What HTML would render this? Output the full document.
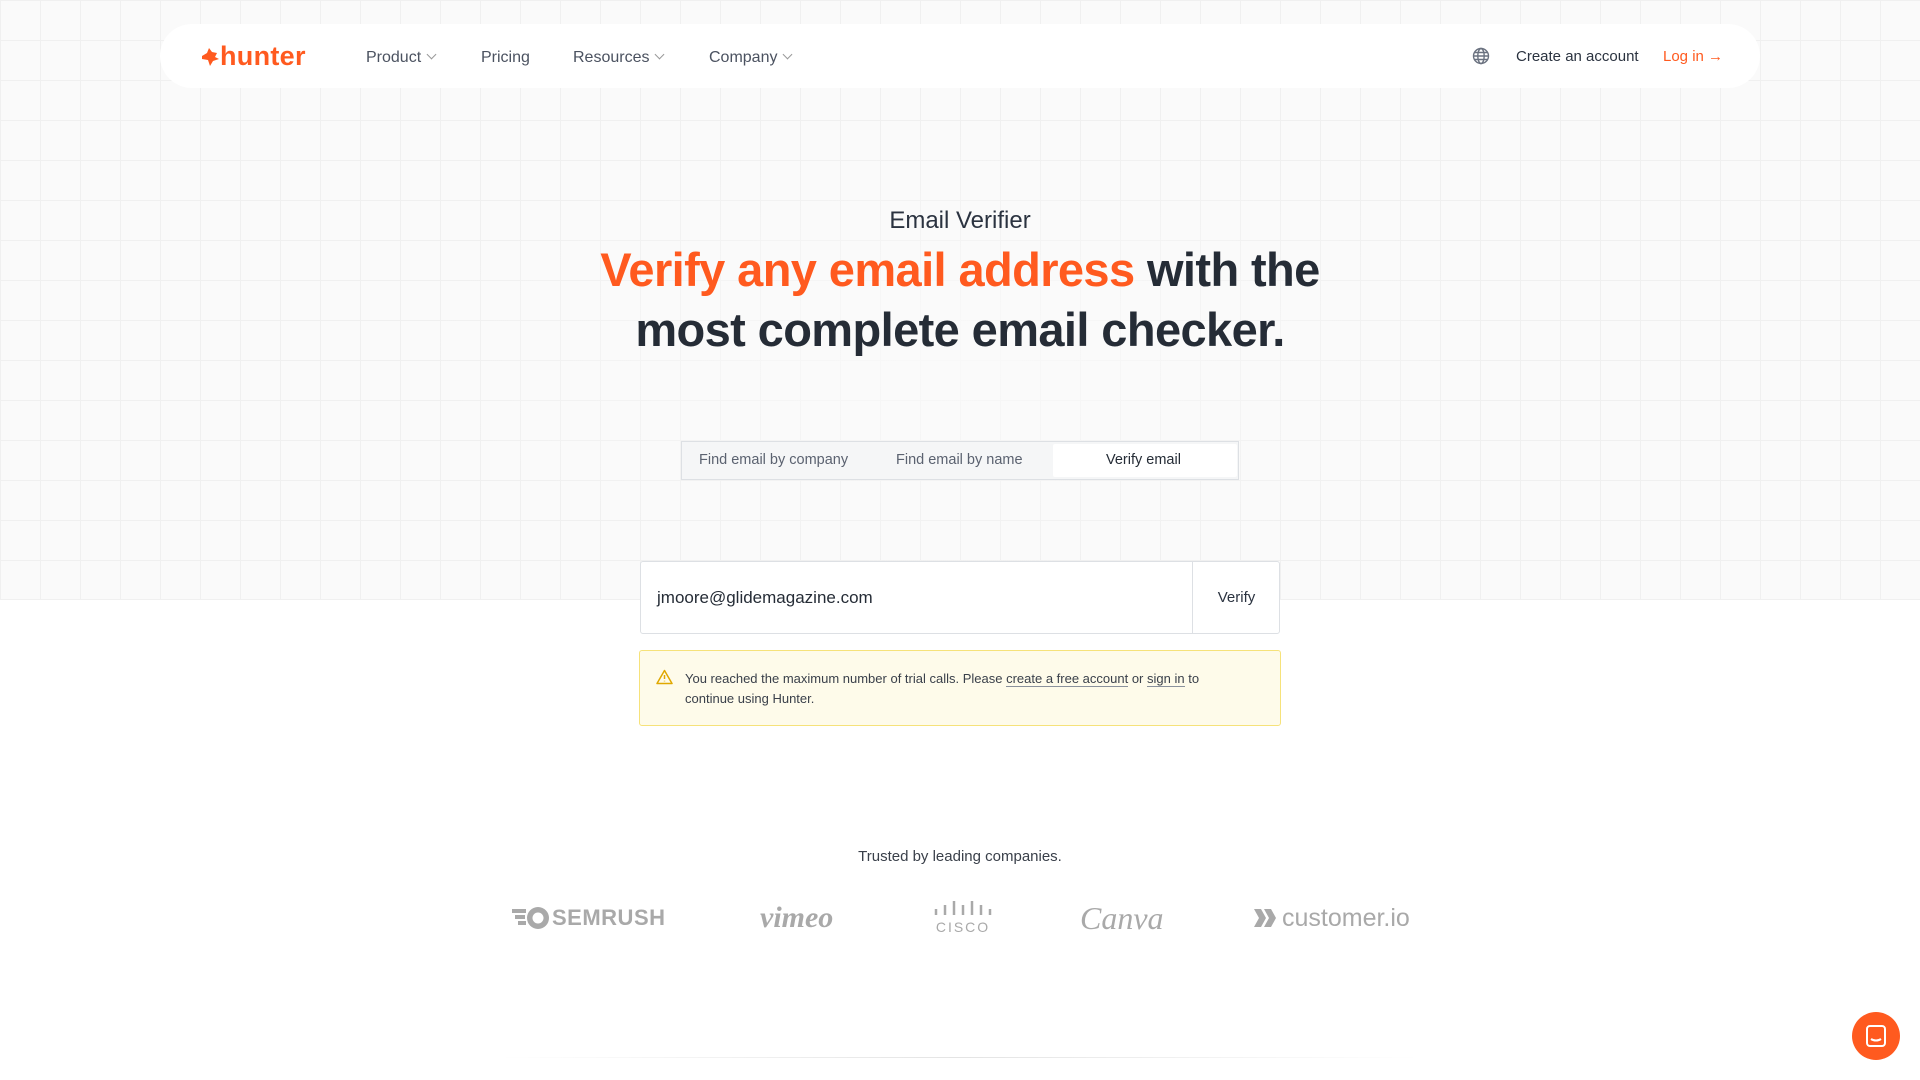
<!DOCTYPE html>
<html><head><meta charset="utf-8"><style>
*{box-sizing:border-box;margin:0;padding:0}
body{width:1920px;height:1080px;overflow:hidden;background:#fff;font-family:"Liberation Sans",sans-serif;color:#2b3340;position:relative}
.grid{position:absolute;left:0;top:0;width:1920px;height:600px;background-color:#fafafa;background-image:linear-gradient(#f0f0f0 1px,transparent 1px),linear-gradient(90deg,#f0f0f0 1px,transparent 1px);background-size:40px 40px;border-bottom:1px solid #f0f0f0}
.fade{position:absolute;left:400px;top:120px;width:1120px;height:460px;background:radial-gradient(ellipse at center,rgba(250,250,250,.85),rgba(250,250,250,0) 70%)}
.nav{position:absolute;left:160px;top:24px;width:1600px;height:64px;background:#fff;border-radius:32px}
.nav span{position:absolute;top:25px;font-size:16px;color:#4b5260}
.logo{position:absolute;left:200px;top:41px;font-size:27px;font-weight:bold;color:#ff5a1f;letter-spacing:0.3px}
.chev{display:inline-block;width:7px;height:7px;border-right:1.3px solid #999;border-bottom:1.3px solid #999;transform:rotate(45deg);margin-left:7px;position:relative;top:-4px}
h2{position:absolute;top:207px;width:100%;text-align:center;font-size:24px;font-weight:normal;color:#2b3340}
h1{position:absolute;top:240px;width:100%;text-align:center;font-size:47px;line-height:60px;font-weight:bold;color:#252c36;letter-spacing:-0.6px}
h1 b{color:#ff5a1f}
.tabs{position:absolute;left:681px;top:441px;width:558px;height:39px;border:1px solid #dde0e4;background:#f5f6f7}
.tabs span{position:absolute;top:10px;font-size:14.5px;color:#5b6270}
.act{position:absolute;left:371px;top:2px;width:184px;height:33px;background:#fff;border-radius:2px}
.inp{position:absolute;left:640px;top:561px;width:640px;height:73px;border:1px solid #dde0e4;background:#fff;border-radius:3px}
.inp .t{position:absolute;left:16px;top:26px;font-size:17px;color:#252c36}
.inp .b{position:absolute;left:551px;top:0;width:88px;height:71px;border-left:1px solid #dde0e4;text-align:center;line-height:71px;font-size:15px}
.alert{position:absolute;left:639px;top:650px;width:642px;height:76px;background:#fefbea;border:1px solid #f6e27a;border-radius:3px;font-size:13px;line-height:20px;color:#3a404a;padding:18px 20px 0 45px}
.alert u{text-decoration:none;border-bottom:1px solid #8a919c}
.trust{position:absolute;top:848px;width:100%;text-align:center;font-size:15px;color:#3a404a}
.logos{position:absolute;top:894px;left:0;width:1920px;height:48px;color:#a9a9a9}
.logos div{position:absolute;top:0;height:48px;display:flex;align-items:center}
.chat{position:absolute;left:1852px;top:1012px;width:48px;height:48px;border-radius:50%;background:#ff5a1f}
.line{position:absolute;left:500px;top:1057px;width:920px;height:1px;background:linear-gradient(90deg,transparent,#e4e4e4,transparent)}
</style></head><body>
<div class="grid"></div><div class="fade"></div>
<div class="nav"></div>
<div class="logo"><svg width="20" height="20" viewBox="0 0 20 20" style="position:relative;top:2px"><path d="M2 9 L7 6 L9 1 L12 5 L17 6 L15 10 L19 12 L13 14 L10 19 L8 13 L2 12 Z" fill="#ff5a1f"/></svg>hunter</div>
<div class="nav" style="background:none">
<span style="left:206px">Product<i class="chev"></i></span>
<span style="left:321px">Pricing</span>
<span style="left:413px">Resources<i class="chev"></i></span>
<span style="left:549px">Company<i class="chev"></i></span>
<span style="left:1312px;top:23px"><svg width="18" height="18" viewBox="0 0 18 18" fill="none" stroke="#6b7280" stroke-width="1.4"><circle cx="9" cy="9" r="7.5"/><ellipse cx="9" cy="9" rx="3.2" ry="7.5"/><path d="M1.5 9h15M2.5 5.5h13M2.5 12.5h13"/></svg></span>
<span style="left:1356px;color:#2b3340;font-size:15px;top:24px">Create an account</span>
<span style="left:1503px;color:#ff5a1f;font-size:15px;top:24px">Log in →</span>
</div>
<h2>Email Verifier</h2>
<h1><b>Verify any email address</b> with the<br>most complete email checker.</h1>
<div class="tabs"><span style="left:17px">Find email by company</span><span style="left:214px">Find email by name</span><div class="act"></div><span style="left:424px;color:#252c36">Verify email</span></div>
<div class="inp"><div class="t">jmoore@glidemagazine.com</div><div class="b">Verify</div></div>
<div class="alert"><svg width="17" height="16" viewBox="0 0 17 16" style="position:absolute;left:16px;top:18px" fill="none" stroke="#e0a800" stroke-width="1.5"><path d="M8.5 1.5 L16 14.5 H1 Z" stroke-linejoin="round"/><path d="M8.5 6v4M8.5 11.8v.6"/></svg>You reached the maximum number of trial calls. Please <u>create a free account</u> or <u>sign in</u> to<br>continue using Hunter.</div>
<div class="trust">Trusted by leading companies.</div>
<div class="logos">
<div style="left:512px;font-weight:bold;font-size:22px;letter-spacing:0.5px"><svg width="40" height="26" viewBox="0 0 40 26"><path d="M0 6h14M3 12h10M6 18h8" stroke="#a9a9a9" stroke-width="4"/><circle cx="26" cy="13" r="11" fill="#a9a9a9"/><circle cx="26" cy="13" r="5.5" fill="#fff"/></svg>SEMRUSH</div>
<div style="left:760px;font:italic bold 30px 'Liberation Serif',serif">vimeo</div>
<div style="left:934px;flex-direction:column;justify-content:center"><svg width="58" height="20" viewBox="0 0 58 20"><g stroke="#a9a9a9" stroke-width="2.5"><path d="M2 8v6M11 4v10M20 0v14M29 4v10M38 0v14M47 4v10M56 8v6"/></g></svg><span style="font-size:14px;letter-spacing:2px;margin-top:-2px">CISCO</span></div>
<div style="left:1080px;font:italic 32px 'Liberation Serif',serif">Canva</div>
<div style="left:1254px;font-size:25px"><svg width="22" height="22" viewBox="0 0 22 22" style="margin-right:6px"><path d="M0 2h7l5 9-5 9H0l5-9z M10 2h7l5 9-5 9h-7l5-9z" fill="#a9a9a9"/></svg>customer.io</div>
</div>
<div class="line"></div>
<div class="chat"><svg width="48" height="48" viewBox="0 0 48 48" fill="none" stroke="#fff" stroke-width="2"><rect x="15" y="14" width="18" height="20" rx="3"/><path d="M19 27c3 2 7 2 10 0"/></svg></div>
</body></html>
